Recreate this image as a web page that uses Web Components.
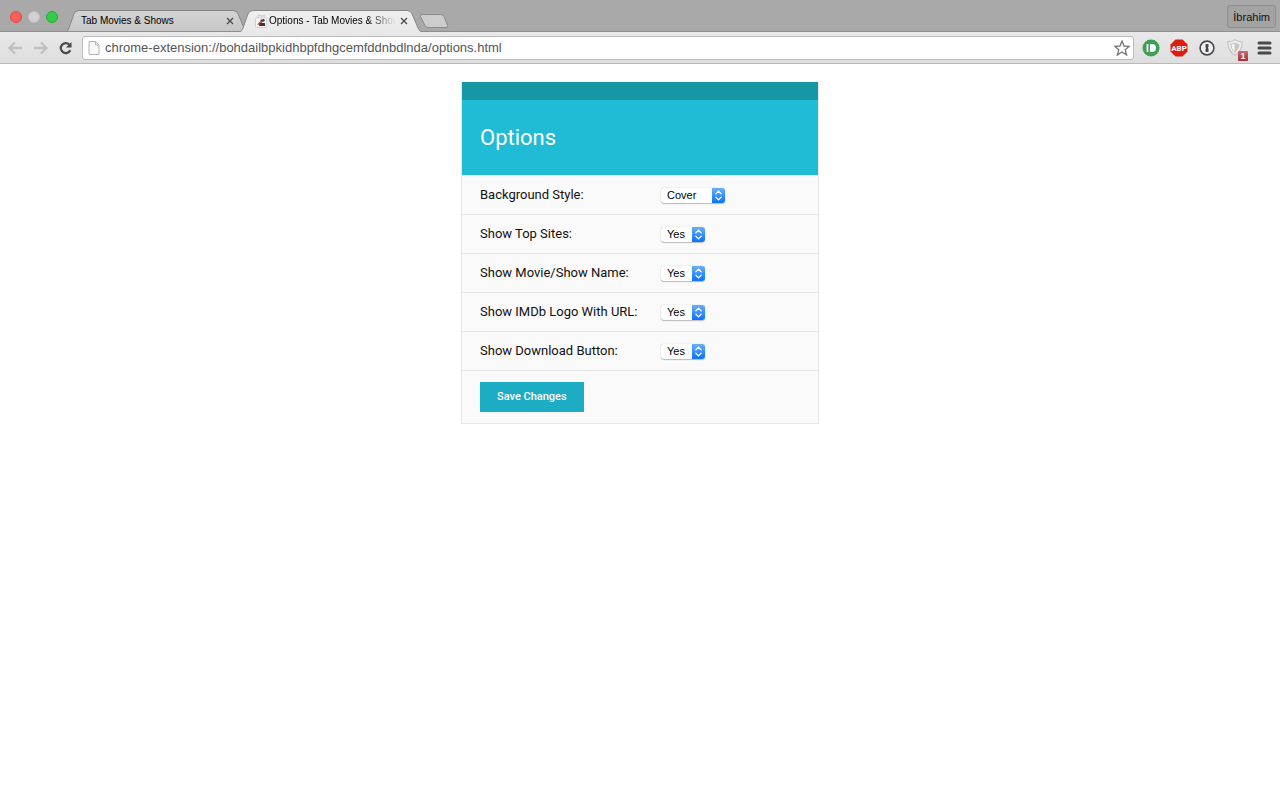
<!DOCTYPE html>
<html lang="en">
<head>
<meta charset="utf-8">
<title>Options - Tab Movies &amp; Shows</title>
<style>
  body { margin: 0; background: #fff; font-family: "Liberation Sans", Arial, sans-serif; }
</style>
</head>
<body>
<browser-window>
  <tab-strip slot="tabs" user="İbrahim">
    <browser-tab>Tab Movies &amp; Shows</browser-tab>
    <browser-tab active>
      <movie-favicon slot="icon"></movie-favicon>Options - Tab Movies &amp; Shows
    </browser-tab>
  </tab-strip>
  <browser-toolbar slot="toolbar" url="chrome-extension://bohdailbpkidhbpfdhgcemfddnbdlnda/options.html"></browser-toolbar>
  <options-card heading="Options">
    <option-row label="Background Style:" choices="Cover,Contain" wide></option-row>
    <option-row label="Show Top Sites:" choices="Yes,No"></option-row>
    <option-row label="Show Movie/Show Name:" choices="Yes,No"></option-row>
    <option-row label="Show IMDb Logo With URL:" choices="Yes,No"></option-row>
    <option-row label="Show Download Button:" choices="Yes,No"></option-row>
    <save-button slot="actions">Save Changes</save-button>
  </options-card>
</browser-window>

<script>
const define = (name, render) => customElements.define(name, class extends HTMLElement {
  connectedCallback() {
    if (this.shadowRoot) return;
    this.attachShadow({ mode: "open" }).innerHTML = render(this);
  }
});

define("browser-window", () => `
  <style>
    :host { display: flex; flex-direction: column; min-height: 100vh; }
    main { flex: 1; padding: 18px 16px; background: #fff; }
  </style>
  <slot name="tabs"></slot>
  <slot name="toolbar"></slot>
  <main><slot></slot></main>`);

define("tab-strip", el => `
  <style>
    :host { display: flex; align-items: flex-end; height: 32px; background: #a9a9a9; box-shadow: inset 0 -1px #8e8e8e; }
    .lights { display: flex; align-self: center; gap: 6px; padding: 2px 8px 0 10px; }
    .lights button { width: 12px; height: 12px; padding: 0; border: 1px solid #e0483f; border-radius: 50%; background: #fc605b; }
    .lights .min { border-color: #c0c0c0; background: #d1d1d1; }
    .lights .max { border-color: #25ac36; background: #33cb48; }
    .new { align-self: center; width: 30px; height: 16px; margin: 10px 0 0 5px; padding: 0; border: 0; background: none; }
    .new svg { display: block; }
    .user { margin: 0 4px 4px auto; height: 23px; padding: 0 5px; border: 1px solid #8d8d8d; border-radius: 3px;
      background: #a3a3a3; color: #111; font: 11px "Liberation Sans", Arial, sans-serif; }
  </style>
  <div class="lights">
    <button aria-label="Close window"></button>
    <button class="min" aria-label="Minimise window"></button>
    <button class="max" aria-label="Zoom window"></button>
  </div>
  <slot></slot>
  <button class="new" aria-label="New tab">
    <svg width="30" height="16" viewBox="0 0 30 16"><path d="M3 1.500h19q2 0 3 2l3.600 9q.6 2-1.600 2H9q-2 0-3-2L1.500 3.500Q1 1.500 3 1.500z" fill="#cdcdcd" stroke="#8a8a8a"/></svg>
  </button>
  <button class="user">${el.getAttribute("user")}</button>`);

define("browser-tab", el => {
  const on = el.hasAttribute("active");
  return `
  <style>
    :host { position: relative; display: flex; align-items: center; box-sizing: border-box; flex: 0 1 182px; height: 22px;
      margin-right: -8px; padding: 0 12px 0 15px; gap: 2px; z-index: ${on ? 1 : 0}; min-width: 0; }
    .shape { position: absolute; inset: 0; width: 100%; height: 100%; }
    .title, button, ::slotted(*) { position: relative; }
    .title { flex: 1; overflow: hidden; white-space: nowrap; font-size: 10px; line-height: 16px; color: #000;
      ${on ? "-webkit-mask-image: linear-gradient(90deg,#000 78%,transparent);mask-image: linear-gradient(90deg,#000 78%,transparent);" : ""} }
    button { width: 12px; height: 12px; padding: 2px; border: 0; background: none; }
    button svg { display: block; }
  </style>
  <svg class="shape" viewBox="0 0 184 22" preserveAspectRatio="none">
    <defs><linearGradient id="g" x2="0" y2="1"><stop stop-color="${on ? "#efefef" : "#d4d4d4"}"/><stop offset="1" stop-color="${on ? "#e9e9e9" : "#c6c6c6"}"/></linearGradient></defs>
    <path d="M0 22Q2 21 3 18L8 4Q9.500.5 13 .5H169Q172.500.5 174 4L180 18Q181 21 184 22" fill="url(#g)" stroke="#858585"/>
    ${on ? "" : '<path d="M0 21.500H184" stroke="#8e8e8e"/>'}
  </svg>
  <slot name="icon"></slot>
  <div class="title"><slot></slot></div>
  <button aria-label="Close tab"><svg width="8" height="8" viewBox="0 0 8 8"><path d="M1 1l6 6M7 1L1 7" stroke="#4a4a4a" stroke-width="1.300"/></svg></button>`;
});

define("movie-favicon", () => `
  <style>:host { display: block; flex: none; width: 12px; height: 13px; } svg { display: block; }</style>
  <svg width="12" height="13" viewBox="0 0 12 13">
    <path d="M2 .5h8M1 2h10" stroke="#d2d2d2"/>
    <rect x=".5" y="3" width="11" height="9.500" rx="1" fill="#f8f8f8" stroke="#d0d0d0"/>
    <path d="M5 5l4-1 1 2-3 1z" fill="#3b3434"/><path d="M2 9.500l4-4 1.500 1.500-2 3z" fill="#d6403b"/><path d="M5 8h5v3H4z" fill="#3b3434"/>
  </svg>`);

define("browser-toolbar", el => `
  <style>
    :host { display: flex; align-items: center; box-sizing: border-box; height: 32px; padding: 0 8px;
      border-bottom: 1px solid #b9b9b9; background: linear-gradient(#e9e9e9, #dedede); }
    button { flex: none; padding: 0; border: 0; background: none; }
    svg { display: block; }
    .nav { display: flex; gap: 10px; margin-right: 9px; }
    .box { display: flex; align-items: center; flex: 1; box-sizing: border-box; height: 24px; padding: 0 3px 0 5px; gap: 5px;
      border: 1px solid #bcbcbc; border-radius: 3px; background: #fff; }
    input { flex: 1; min-width: 0; padding: 0; border: 0; outline: 0; background: none; color: #555;
      font: 13px "Liberation Sans", Arial, sans-serif; }
    .tools { display: flex; gap: 10px; margin-left: 8px; }
    .tools button { position: relative; width: 18px; height: 18px; }
    .tools .menu { width: 15px; margin-left: 3px; }
    .count { position: absolute; right: -4px; bottom: -4px; width: 10px; height: 10px; border-radius: 1px;
      background: linear-gradient(#cf6a6a, #a92c2c); color: #fff; font: bold 9px/10px "Liberation Sans", Arial, sans-serif; text-align: center; }
  </style>
  <div class="nav">
    <button aria-label="Back"><svg width="15" height="14" viewBox="0 0 15 14"><path d="M7 1.500L1.500 7 7 12.500M2 7H14" fill="none" stroke="#c1c1c1" stroke-width="2.400"/></svg></button>
    <button aria-label="Forward"><svg width="15" height="14" viewBox="0 0 15 14"><path d="M8 1.500L13.500 7 8 12.500M13 7H1" fill="none" stroke="#c1c1c1" stroke-width="2.400"/></svg></button>
    <button aria-label="Reload"><svg width="15" height="14" viewBox="0 0 15 14"><path d="M12.300 9.200A5 5 0 1 1 11.300 3.500" fill="none" stroke="#484848" stroke-width="2.200"/><path d="M13.500 1v5.500H8z" fill="#484848"/></svg></button>
  </div>
  <div class="box">
    <svg width="12" height="14" viewBox="0 0 12 14"><path d="M1 .5h6.500l3.500 3.500v9.500H1z" fill="#f8f8f8" stroke="#b4b4b4"/><path d="M7.500.5V4H11" fill="none" stroke="#b4b4b4"/></svg>
    <input type="text" aria-label="Address" value="${el.getAttribute("url")}" spellcheck="false">
    <button aria-label="Bookmark"><svg width="16" height="16" viewBox="0 0 16 16"><path d="M8 1l2 5 5.200.3-4 3.400L12.600 15 8 12 3.400 15l1.400-5.300-4-3.400L6 6z" fill="#fff" stroke="#777" stroke-width="1.300"/></svg></button>
  </div>
  <div class="tools">
    <button aria-label="Pushbullet"><svg width="18" height="18" viewBox="0 0 18 18"><circle cx="9" cy="9" r="8.500" fill="#3c9f54"/><path d="M5.500 5v8" stroke="#fff" stroke-width="1.800"/><path d="M8 5h2a4 4 0 0 1 0 8H8z" fill="#fff"/></svg></button>
    <button aria-label="Adblock Plus"><svg width="18" height="18" viewBox="0 0 18 18"><path d="M5.500.5h7l5 5v7l-5 5h-7l-5-5v-7z" fill="#dd1d12"/><text x="9" y="12" text-anchor="middle" font-family="Roboto, sans-serif" font-size="8" font-weight="bold" fill="#fff">ABP</text></svg></button>
    <button aria-label="Password manager"><svg width="18" height="18" viewBox="0 0 18 18"><circle cx="9" cy="9" r="6.900" fill="#f2f2f2" stroke="#484a50" stroke-width="1.600"/><path d="M7.500 5h3v3l-.7.8.7.8V13h-3v-3l.7-.8-.7-.8z" fill="#484a50"/></svg></button>
    <button aria-label="Shield"><svg width="18" height="18" viewBox="0 0 18 18"><path d="M9 .8Q12 2.800 16.300 2.800 16.300 12 9 16.500 1.700 12 1.700 2.800 6 2.800 9 .8z" fill="#ededed" stroke="#c6c6c6" stroke-width="1.300"/><path d="M9 4Q11 5 13.300 5.100 13 10.500 9 13.500z" fill="#c4c4c4"/><path d="M9 4Q7 5 4.700 5.100 5 10.500 9 13.500z" fill="#f6f6f6" stroke="#c4c4c4"/></svg><span class="count">1</span></button>
    <button class="menu" aria-label="Menu"><svg width="15" height="18" viewBox="0 0 15 18"><path d="M2 4h11M2 9h11M2 14h11" stroke="#484848" stroke-width="3" stroke-linecap="round"/></svg></button>
  </div>`);

define("options-card", el => `
  <style>
    :host { display: block; box-sizing: border-box; max-width: 358px; margin: 0 auto; border: 1px solid #e8e8e8; border-top: 0;
      background: #fafafa; font-family: Roboto, sans-serif; }
    header { display: flex; align-items: center; height: 75px; padding: 0 18px; border-top: 18px solid #1797a6;
      border-bottom: 1px solid #e6f4f6; background: #20bbd4; }
    h1 { margin: 0; font-size: 22px; font-weight: 400; line-height: 28px; color: #fff; }
    footer { padding: 11px 18px; }
  </style>
  <header><h1>${el.getAttribute("heading")}</h1></header>
  <slot></slot>
  <footer><slot name="actions"></slot></footer>`);

define("option-row", el => `
  <style>
    :host { display: grid; grid-template-columns: 181px 1fr; align-items: center; height: 38px; padding: 0 18px;
      border-bottom: 1px solid #e6e6e6; }
    label { font-size: 13px; line-height: 18px; color: #111; }
    .pick { display: grid; justify-self: start; width: ${el.hasAttribute("wide") ? 64 : 44}px; margin-top: 1px; }
    select, svg { grid-area: 1 / 1; }
    select { appearance: none; width: 100%; height: 15px; box-sizing: border-box; margin: 0; padding: 0 14px 0 6px; border: 0;
      border-radius: 3px; background: #fff; box-shadow: 0 0 1px #aaa, 0 1px 1px #bbb; color: #000;
      font: 11px/15px "Liberation Sans", Arial, sans-serif; }
    svg { justify-self: end; pointer-events: none; }
  </style>
  <label for="choice">${el.getAttribute("label")}</label>
  <div class="pick">
    <select id="choice">${el.getAttribute("choices").split(",").map(c => `<option>${c}</option>`).join("")}</select>
    <svg width="13" height="15" viewBox="0 0 13 15">
      <defs><linearGradient id="b" x2="0" y2="1"><stop stop-color="#66b0fb"/><stop offset="1" stop-color="#0a72fb"/></linearGradient></defs>
      <path d="M0 0h10q3 0 3 3v9q0 3-3 3H0z" fill="url(#b)"/>
      <path d="M3.800 5.900L6.500 3.200l2.700 2.700M3.800 9.100l2.700 2.700 2.700-2.700" fill="none" stroke="#fff" stroke-width="1.300" stroke-linecap="round"/>
    </svg>
  </div>`);

define("save-button", () => `
  <style>
    :host { display: block; }
    button { display: block; height: 30px; padding: 0 17px; border: 0; background: #1cacc3; color: #fff;
      font: 500 11px/30px Roboto, sans-serif; }
  </style>
  <button type="button"><slot></slot></button>`);
</script>
</body>
</html>
